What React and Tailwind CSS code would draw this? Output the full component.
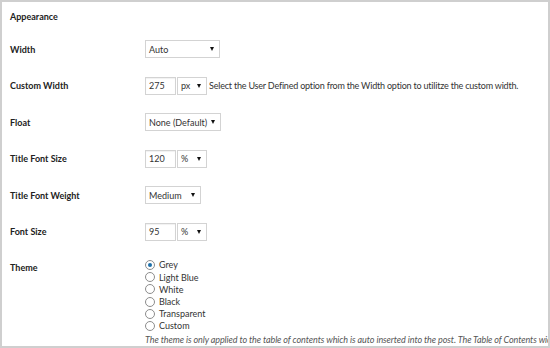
const font = { fontFamily: 'Lato, "Open Sans", sans-serif' }

function Select({ value, width }) {
  return (
    <div
      className={`flex shrink-0 items-center justify-between h-[18px] border border-[#d3d3d3] bg-white pl-[3px] pr-[5px] text-[9px] text-[#333] whitespace-nowrap ${width}`}
    >
      <span>{value}</span>
      <span className="w-0 h-0 border-l-[2.5px] border-r-[2.5px] border-t-[4px] border-l-transparent border-r-transparent border-t-[#111]" />
    </div>
  )
}

function Input({ value }) {
  return (
    <div className="flex shrink-0 items-center h-[18px] w-[31px] border border-[#d3d3d3] bg-white pl-[3px] text-[9px] text-[#333] shadow-[inset_0_1px_1px_rgba(0,0,0,0.06)]">
      {value}
    </div>
  )
}

function Row({ label, children }) {
  return (
    <div className="flex items-center h-[36.5px]">
      <div className="w-[143px] shrink-0 pl-[8px] text-[9px] font-bold text-[#222]">{label}</div>
      <div className="flex items-center gap-[1px]">{children}</div>
    </div>
  )
}

function Radio({ label, checked }) {
  return (
    <div className="flex items-center h-[12.2px] gap-[4px]">
      <span className="flex shrink-0 items-center justify-center w-[10px] h-[10px] rounded-full border border-[#8c8c8c] bg-white">
        {checked && <span className="w-[4px] h-[4px] rounded-full bg-[#1e6fa8]" />}
      </span>
      <span className="text-[9px] text-[#333] whitespace-nowrap">{label}</span>
    </div>
  )
}

export default function App() {
  const themes = ['Grey', 'Light Blue', 'White', 'Black', 'Transparent', 'Custom']
  return (
    <div className="w-[550px] h-[348px] bg-white overflow-hidden" style={font}>
      <div className="w-full h-full border-2 border-[#cfcfcf] overflow-hidden">
        <div className="h-[29px] flex items-center pl-[8px] text-[9px] font-bold text-[#222]">
          Appearance
        </div>
        <Row label="Width">
          <Select value="Auto" width="w-[75px]" />
        </Row>
        <Row label="Custom Width">
          <Input value="275" />
          <Select value="px" width="w-[30px]" />
          <span className="ml-[1px] text-[9px] tracking-[-0.2px] text-[#333] whitespace-nowrap">
            Select the User Defined option from the Width option to utilitze the custom width.
          </span>
        </Row>
        <Row label="Float">
          <Select value="None (Default)" width="w-[76px]" />
        </Row>
        <Row label="Title Font Size">
          <Input value="120" />
          <Select value="%" width="w-[30px]" />
        </Row>
        <Row label="Title Font Weight">
          <Select value="Medium" width="w-[56px]" />
        </Row>
        <Row label="Font Size">
          <Input value="95" />
          <Select value="%" width="w-[30px]" />
        </Row>
        <div className="flex pt-[9px]">
          <div className="w-[143px] shrink-0 pl-[8px] pt-[2px] text-[9px] font-bold text-[#222]">Theme</div>
          <div className="flex flex-col min-w-0">
            {themes.map((t, i) => (
              <Radio key={t} label={t} checked={i === 0} />
            ))}
            <div className="mt-[1px] text-[9px] tracking-[-0.08px] italic text-[#555] whitespace-nowrap">
              The theme is only applied to the table of contents which is auto inserted into the post. The Table of Contents widget will inherit the theme.
            </div>
          </div>
        </div>
      </div>
    </div>
  )
}
